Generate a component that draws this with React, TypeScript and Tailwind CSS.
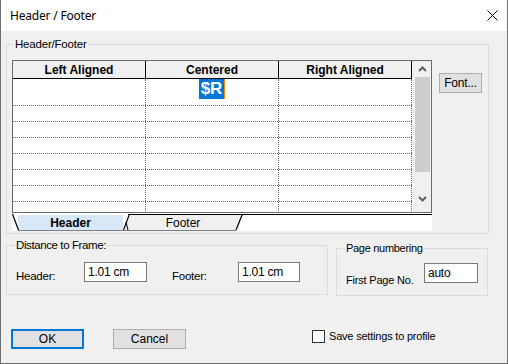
import React from "react";

const sans = "font-['Liberation_Sans',Arial,sans-serif]";

const bodyRows = [27, 16, 16, 16, 16, 16, 16, 16];

const Chevron = ({ up }: { up?: boolean }) => (
  <svg width="9" height="6" viewBox="0 0 9 6">
    <polyline
      points={up ? "1,5 4.5,1.5 8,5" : "1,1 4.5,4.5 8,1"}
      fill="none"
      stroke="#606060"
      strokeWidth="2"
    />
  </svg>
);

const TabStrip = () => (
  <svg width="420" height="18" viewBox="0 0 420 18" className="block">
    <rect x="0" y="0" width="420" height="18" fill="#ffffff" />
    {/* black top line behind the inactive tab */}
    <rect x="116" y="1" width="304" height="1" fill="#000000" />
    {/* Header (active) */}
    <rect x="6" y="2" width="105" height="15" fill="#d9e8f7" />
    <line x1="0.5" y1="1" x2="6.5" y2="17" stroke="#000" strokeWidth="1.2" />
    <line x1="6" y1="17.5" x2="111" y2="17.5" stroke="#808080" strokeWidth="1" />
    {/* Footer */}
    <polygon points="117,2 230,2 224,17 111,17" fill="#f0f0f0" />
    <line x1="117.5" y1="1" x2="111.5" y2="17" stroke="#000" strokeWidth="1.2" />
    <line x1="114" y1="9" x2="116" y2="17" stroke="#000" strokeWidth="1" />
    <line x1="230.5" y1="1" x2="224" y2="17" stroke="#000" strokeWidth="1.2" />
    <line x1="111" y1="17.5" x2="224" y2="17.5" stroke="#808080" strokeWidth="1" />
    <text x="58.5" y="14" textAnchor="middle" fontFamily="Liberation Sans, Arial, sans-serif" fontSize="12" fontWeight="bold" fill="#000">
      Header
    </text>
    <text x="171" y="14" textAnchor="middle" fontFamily="Liberation Sans, Arial, sans-serif" fontSize="12" fill="#000">
      Footer
    </text>
  </svg>
);

const HeaderFooterTable = () => {
  return (
    <div className="w-[420px] h-[153px] border border-[#696969] flex overflow-hidden bg-white">
      <div className="w-[399px] flex flex-col">
        <div className="flex h-[18px] bg-[#f0f0f0] border-b border-black shrink-0">
          {["Left Aligned", "Centered", "Right Aligned"].map((h) => (
            <div key={h} className="w-[133px] border-r border-black flex items-center justify-center text-[12px] font-bold text-black">
              {h}
            </div>
          ))}
        </div>
        {bodyRows.map((h, i) => (
          <div key={i} className="flex shrink-0 border-b border-dotted border-[#6b6b6b]" style={{ height: h }}>
            {[0, 1, 2].map((c) => (
              <div key={c} className="w-[133px] border-r border-dotted border-[#6b6b6b] flex justify-center items-start">
                {i === 0 && c === 1 && (
                  <span className="flex items-center h-[20px] bg-[#0078d7] text-white font-bold text-[17px] leading-[20px] px-[2px] border-r border-[#ff8c00]">
                    $R
                  </span>
                )}
              </div>
            ))}
          </div>
        ))}
      </div>
      <div className="w-[19px] bg-[#f0f0f0] flex flex-col">
        <div className="h-[16px] flex items-center justify-center pl-[2px]">
          <Chevron up />
        </div>
        <div className="ml-[3px] w-[15px] h-[95px] bg-[#cdcdcd]" />
        <div className="flex-1" />
        <div className="h-[18px] flex items-start justify-center pl-[2px] pt-[2px]">
          <Chevron />
        </div>
      </div>
    </div>
  );
};

const TextBox = ({ value, w }: { value: string; w: string }) => (
  <div className={`${w} h-[20px] border border-[#7a7a7a] bg-white pl-[3px] flex items-center text-[12px] text-black`}>
    {value}
  </div>
);

export default function App() {
  return (
    <div className={`w-[508px] h-[364px] flex flex-col border-x border-b border-[#6f6f6f] ${sans} text-[11px] text-black`}>
      {/* title bar */}
      <div className="h-[31px] bg-white flex items-center justify-between pl-[9px] pr-[9px] shrink-0">
        <span className="font-['Noto_Sans','Segoe_UI',sans-serif] text-[12px] tracking-[-0.2px]">Header / Footer</span>
        <svg width="11" height="11" viewBox="0 0 11 11">
          <path d="M0.5 0.5 L10.5 10.5 M10.5 0.5 L0.5 10.5" stroke="#000" strokeWidth="1" />
        </svg>
      </div>

      <div className="flex-1 bg-[#f0f0f0] flex flex-col">
        {/* Header/Footer group */}
        <fieldset className="mt-[6px] ml-[5px] w-[483px] border border-[#dcdcdc] px-[5px] pb-[2px]">
          <legend className="ml-[1px] px-[2px] leading-[14px] text-[11.5px] tracking-[-0.2px]">Header/Footer</legend>
          <div className="flex items-start mt-[9px]">
            <div className="flex flex-col">
              <HeaderFooterTable />
              <TabStrip />
            </div>
            <button className="ml-[7px] mt-[13px] w-[43px] h-[20px] border border-[#adadad] bg-[#e1e1e1] text-[12px] tracking-[-0.2px] flex items-center justify-center">
              Font...
            </button>
          </div>
        </fieldset>

        {/* distance + page numbering */}
        <div className="flex items-start h-[62px] tracking-[-0.25px]">
          <fieldset className="mt-[4px] ml-[5px] w-[322px] h-[57px] border border-[#dcdcdc] pl-[9px]">
            <legend className="-ml-[1px] px-[1px] leading-[14px] text-[11.5px] tracking-[-0.4px]">Distance to Frame:</legend>
            <div className="flex items-start mt-[10px]">
              <span className="w-[68px] mt-[7px] leading-[14px] text-[11.5px]">Header:</span>
              <TextBox value="1.01 cm" w="w-[63px]" />
              <span className="ml-[25px] w-[66px] mt-[7px] leading-[14px] text-[11.5px]">Footer:</span>
              <TextBox value="1.01 cm" w="w-[62px]" />
            </div>
          </fieldset>
          <fieldset className="mt-[7px] ml-[8px] w-[152px] h-[55px] border border-[#dcdcdc] pl-[9px]">
            <legend className="-ml-[1px] px-[1px] leading-[14px] text-[11px] tracking-[-0.3px]">Page numbering</legend>
            <div className="flex items-start mt-[8px]">
              <span className="w-[78px] mt-[10px] leading-[14px] text-[11px] tracking-[-0.2px]">First Page No.</span>
              <TextBox value="auto" w="w-[54px]" />
            </div>
          </fieldset>
        </div>

        {/* buttons */}
        <div className="flex items-start mt-[33px]">
          <button className="ml-[10px] w-[73px] h-[20px] border-2 border-[#0078d7] bg-[#e1e1e1] text-[12px] flex items-center justify-center">
            OK
          </button>
          <button className="ml-[29px] w-[73px] h-[20px] border border-[#adadad] bg-[#e1e1e1] text-[12px] flex items-center justify-center">
            Cancel
          </button>
          <label className="ml-[126px] flex items-center">
            <span className="w-[13px] h-[13px] border border-[#333333] bg-white" />
            <span className="ml-[4px] text-[11px] leading-[14px] tracking-[-0.2px]">Save settings to profile</span>
          </label>
        </div>
      </div>
    </div>
  );
}
